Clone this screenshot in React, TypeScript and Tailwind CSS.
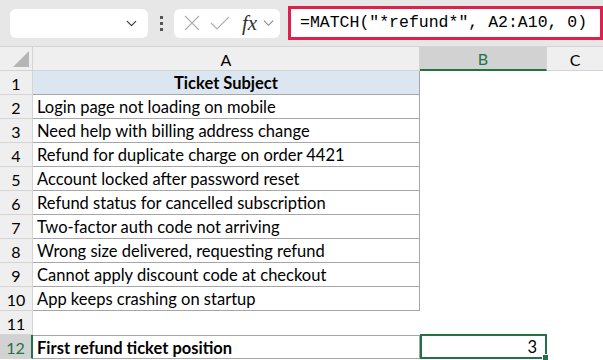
import { ChevronDown } from "lucide-react";

const rows = [
  "Login page not loading on mobile",
  "Need help with billing address change",
  "Refund for duplicate charge on order 4421",
  "Account locked after password reset",
  "Refund status for cancelled subscription",
  "Two-factor auth code not arriving",
  "Wrong size delivered, requesting refund",
  "Cannot apply discount code at checkout",
  "App keeps crashing on startup",
];

const cellFont = { fontFamily: "Lato, 'Open Sans', sans-serif" };

function RowHead({ n, active }: { n: number; active?: boolean }) {
  return (
    <div
      className={
        "flex h-6 items-center justify-center border-b border-r border-[#d4d4d4] pt-[2px] text-[16px] " +
        (active ? "border-r-2 border-r-[#217346] bg-[#d2d2d2] text-[#217346]" : "bg-[#efefef] text-black")
      }
    >
      {n}
    </div>
  );
}

export default function App() {
  return (
    <div className="h-[360px] w-[603px] overflow-hidden bg-white" style={cellFont}>
      {/* formula bar */}
      <div className="flex h-[46px] items-center gap-2 bg-[#e7e7e7] pl-[10px]">
        <div className="flex h-[29px] w-[138px] items-center justify-end rounded-md bg-white pr-2">
          <ChevronDown size={17} strokeWidth={1.6} className="text-[#333]" />
        </div>
        <div className="flex w-[10px] flex-col items-center gap-[3px]">
          <span className="h-[3px] w-[3px] bg-[#555]" />
          <span className="h-[3px] w-[3px] bg-[#555]" />
          <span className="h-[3px] w-[3px] bg-[#555]" />
        </div>
        <div className="flex h-[29px] w-[106px] items-center gap-[9px] rounded-md bg-white pl-[9px] text-[#b0b0b0]">
          <svg width="18" height="18" viewBox="0 0 18 18" fill="none" stroke="currentColor" strokeWidth="1.2">
            <path d="M2 2 L16 16 M16 2 L2 16" />
          </svg>
          <svg width="20" height="16" viewBox="0 0 20 16" fill="none" stroke="currentColor" strokeWidth="1.2">
            <path d="M1 8 L7 14 L19 2" />
          </svg>
          <span
            className="ml-[3px] text-[21px] italic leading-none text-[#333]"
            style={{ fontFamily: "'Liberation Serif', serif" }}
          >
            fx
          </span>
          <svg width="11" height="8" viewBox="0 0 12 8" fill="none" stroke="#888" strokeWidth="1.2" className="-ml-[3px]">
            <path d="M1 1.5 L6 6.5 L11 1.5" />
          </svg>
        </div>
        <div className="flex h-[34px] flex-1 items-center border-[3px] border-[#e0204c] bg-white pl-[9px]">
          <span
            className="whitespace-pre text-[16.5px] text-black"
            style={{ fontFamily: "'Liberation Mono', monospace" }}
          >
            =MATCH("*refund*", A2:A10, 0)
          </span>
        </div>
      </div>

      {/* grid */}
      <div className="grid grid-cols-[33px_387px_127px_1fr] border-t border-[#d4d4d4]">
        {/* column headers */}
        <div className="flex h-6 items-end justify-end border-b border-r border-[#d4d4d4] bg-[#efefef] p-[3px]">
          <svg width="16" height="16" viewBox="0 0 16 16">
            <path d="M16 0 L16 16 L0 16 Z" fill="#b5b5b5" />
          </svg>
        </div>
        <div className="flex h-6 items-center justify-center border-b border-r border-[#d4d4d4] bg-[#efefef] pt-[2px] text-[16px]">
          A
        </div>
        <div className="flex h-6 items-center justify-center border-b-2 border-r border-b-[#217346] border-r-[#d4d4d4] bg-[#d2d2d2] pt-[2px] text-[16px] text-[#217346]">
          B
        </div>
        <div className="flex h-6 items-center justify-center border-b border-[#d4d4d4] bg-[#efefef] pt-[2px] text-[16px]">
          C
        </div>

        {/* row 1 */}
        <RowHead n={1} />
        <div className="flex h-6 items-center justify-center border-b border-r border-[#a6a6a6] bg-[#dce6f1] pt-[2px] text-[16.5px] font-bold">
          Ticket Subject
        </div>
        <div />
        <div />

        {rows.map((r, i) => (
          <div key={i} className="contents">
            <RowHead n={i + 2} />
            <div className="flex h-6 items-center border-b border-r border-[#a6a6a6] pl-[4px] pt-[2px] text-[16.5px]">
              {r}
            </div>
            <div />
            <div />
          </div>
        ))}

        <RowHead n={11} />
        <div className="h-6" />
        <div />
        <div />

        <RowHead n={12} active />
        <div className="flex h-6 items-center border-b border-r border-t border-[#a6a6a6] pl-[4px] pt-[2px] text-[16.5px] font-bold">
          First refund ticket position
        </div>
        <div className="relative -mt-px flex h-[25px] items-center justify-end border-2 border-[#217346] pr-2 pt-[2px] text-[16.5px]">
          3
          <span className="absolute -bottom-[3px] -right-[3px] h-[5px] w-[5px] bg-[#217346] outline outline-1 outline-white" />
        </div>
        <div />
      </div>
    </div>
  );
}
